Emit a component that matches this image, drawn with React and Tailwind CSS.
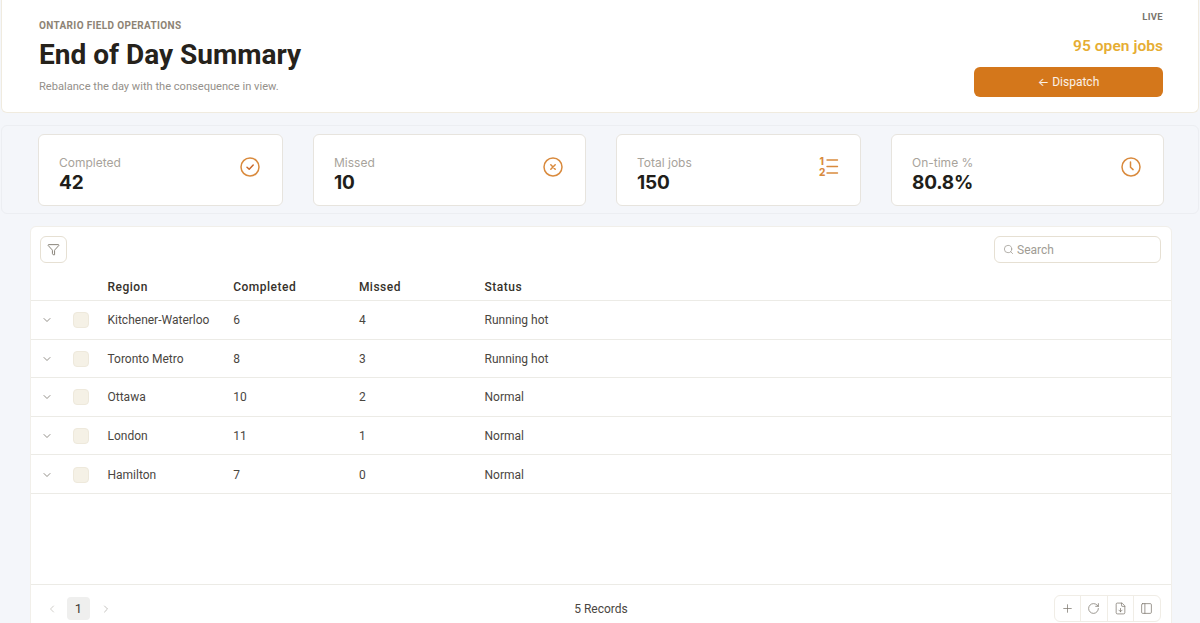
import React from "react";
import { ChevronDown, ChevronLeft, ChevronRight, Search, Plus, RotateCw, FileDown, PanelLeft, Funnel } from "lucide-react";

const rows = [
  ["Kitchener-Waterloo", "6", "4", "Running hot"],
  ["Toronto Metro", "8", "3", "Running hot"],
  ["Ottawa", "10", "2", "Normal"],
  ["London", "11", "1", "Normal"],
  ["Hamilton", "7", "0", "Normal"],
];

function Stat({ label, value, w, children }) {
  return (
    <div className={`${w} h-[72px] bg-white border border-[#e7e4de] rounded-md flex items-center justify-between pl-5 pr-[21px] font-['Inter',sans-serif]`}>
      <div className="flex flex-col pt-[10px]">
        <span className="text-[12px] leading-[16px] text-[#a8a39b]">{label}</span>
        <span className="text-[19px] leading-[24px] font-bold tracking-[-0.2px] text-[#211e1a]">{value}</span>
      </div>
      {children}
    </div>
  );
}

const Ic = ({ children }) => (
  <svg width="22" height="22" viewBox="0 0 22 22" fill="none" stroke="#d98a3d" strokeWidth="1.5" strokeLinecap="round" strokeLinejoin="round" className="-mt-[6px]">
    {children}
  </svg>
);

export default function App() {
  return (
    <div className="h-[623px] w-[1200px] overflow-hidden bg-[#f4f6fa] font-['Roboto',sans-serif] text-[#3a362f]">
      <header className="mx-[1px] h-[113px] bg-white border border-[#f0ebdf] border-t-0 rounded-b-md flex justify-between pl-[37px] pr-[35px]">
        <div className="pt-[18px]">
          <div className="text-[10px] leading-[15px] font-bold uppercase tracking-[0.35px] text-[#8d8374]">Ontario Field Operations</div>
          <h1 className="mt-[4px] text-[28px] leading-[36px] font-bold text-[#26221b]">End of Day Summary</h1>
          <p className="mt-[6px] text-[11.1px] leading-[16px] text-[#94908a]">Rebalance the day with the consequence in view.</p>
        </div>
        <div className="flex flex-col items-end pt-[10px] w-[189px]">
          <div className="text-[9.5px] leading-[14px] font-bold tracking-[0.3px] text-[#7a756d]">LIVE</div>
          <div className="mt-[11px] text-[15.5px] leading-[22px] font-semibold tracking-[0.05px] text-[#e6ad33]">95 open jobs</div>
          <button className="mt-[10px] w-full h-[30px] rounded-md bg-[#d4771b] text-white/90 text-[12px] flex items-center justify-center gap-[3px]">
            <span className="font-['Inter',sans-serif] text-[12px] leading-none">←</span>
            <span>Dispatch</span>
          </button>
        </div>
      </header>

      <section className="mt-[12px] mx-[1px] h-[89px] border border-[#eceef2] rounded-md flex items-start gap-[30.5px] pt-[8px] pl-[36px]">
        <Stat label="Completed" value="42" w="w-[244.5px]">
          <Ic><circle cx="11" cy="11" r="9" /><path d="M8 11.2l2.2 2 4-4.2" stroke="#c9682a" /></Ic>
        </Stat>
        <Stat label="Missed" value="10" w="w-[272.5px]">
          <Ic><circle cx="11" cy="11" r="9" /><path d="M8.8 8.8l4.4 4.4M13.2 8.8l-4.4 4.4" /></Ic>
        </Stat>
        <Stat label="Total jobs" value="150" w="w-[244.5px]">
          <Ic>
            <path d="M10 4h10.5M10 10.5h10.5M10 17h10.5" strokeWidth="1.4" />
            <text x="2.5" y="9" fontSize="10" fontWeight="800" fill="#d98a3d" stroke="none" fontFamily="Inter, sans-serif">1</text>
            <text x="2" y="20" fontSize="10" fontWeight="800" fill="#d98a3d" stroke="none" fontFamily="Inter, sans-serif">2</text>
          </Ic>
        </Stat>
        <Stat label="On-time %" value="80.8%" w="w-[272.5px]">
          <Ic><circle cx="11" cy="11" r="9" /><path d="M10.5 6v5.2l2.6 2.4" /></Ic>
        </Stat>
      </section>

      <main className="mt-[12px] ml-[30px] w-[1142px] h-[407px] bg-white border border-[#f1efea] rounded-t-md flex flex-col text-[12px]">
        <div className="h-[45px] flex items-center justify-between pl-[9px] pr-[10px] shrink-0">
          <button className="w-[27px] h-[27px] rounded-md border border-[#e6e0d3] flex items-center justify-center text-[#6e675b]">
            <Funnel size={13} strokeWidth={1.5} />
          </button>
          <div className="w-[167px] h-[27px] rounded-md border border-[#e6e0d3] flex items-center gap-[3px] pl-[8px] text-[#a09c94]">
            <Search size={11} strokeWidth={1.7} />
            <span className="text-[12px]">Search</span>
          </div>
        </div>
        <div className="grid grid-cols-[76.5px_125.7px_125.7px_125.7px_1fr] h-[29px] pt-[2px] shrink-0 items-center border-b border-[#ecebe6] font-medium tracking-[0.5px] text-[#36322b]">
          <span />
          <span>Region</span>
          <span>Completed</span>
          <span>Missed</span>
          <span>Status</span>
        </div>
        {rows.map((r) => (
          <div key={r[0]} className="grid grid-cols-[76.5px_125.7px_125.7px_125.7px_1fr] h-[38.6px] pt-px shrink-0 items-center border-b border-[#ecebe6] text-[#4a463f]">
            <span className="flex items-center pl-[10px] gap-[20px]">
              <ChevronDown size={12} strokeWidth={1.7} className="text-[#7f7b73]" />
              <span className="w-[16px] h-[16px] rounded-[4px] bg-[#f5f1e6] border border-[#eee9dc]" />
            </span>
            <span>{r[0]}</span>
            <span>{r[1]}</span>
            <span>{r[2]}</span>
            <span>{r[3]}</span>
          </div>
        ))}
        <div className="flex-1" />
        <div className="h-[48px] border-t border-[#ecebe6] grid grid-cols-[1fr_auto_1fr] items-center px-[10px] shrink-0">
          <div className="flex items-center pl-[5px]">
            <ChevronLeft size={12} strokeWidth={1.6} className="text-[#c4c2bd]" />
            <span className="ml-[9px] w-[23px] h-[23px] rounded bg-[#efefee] flex items-center justify-center text-[13px] text-[#3d3a35]">1</span>
            <ChevronRight size={12} strokeWidth={1.6} className="ml-[10px] text-[#b5b3ae]" />
          </div>
          <span className="text-center text-[#4a463f]">5 Records</span>
          <div className="flex justify-end">
            <div className="flex h-[27px] rounded-md border border-[#f0ede6] text-[#7f7a70]">
              <span className="w-[26.25px] flex items-center justify-center border-r border-[#f0ede6]"><Plus size={13} strokeWidth={1.4} /></span>
              <span className="w-[26.25px] flex items-center justify-center border-r border-[#f0ede6]"><RotateCw size={13} strokeWidth={1.4} /></span>
              <span className="w-[26.25px] flex items-center justify-center border-r border-[#f0ede6]"><FileDown size={13} strokeWidth={1.4} /></span>
              <span className="w-[26.25px] flex items-center justify-center"><PanelLeft size={13} strokeWidth={1.4} /></span>
            </div>
          </div>
        </div>
      </main>
    </div>
  );
}
